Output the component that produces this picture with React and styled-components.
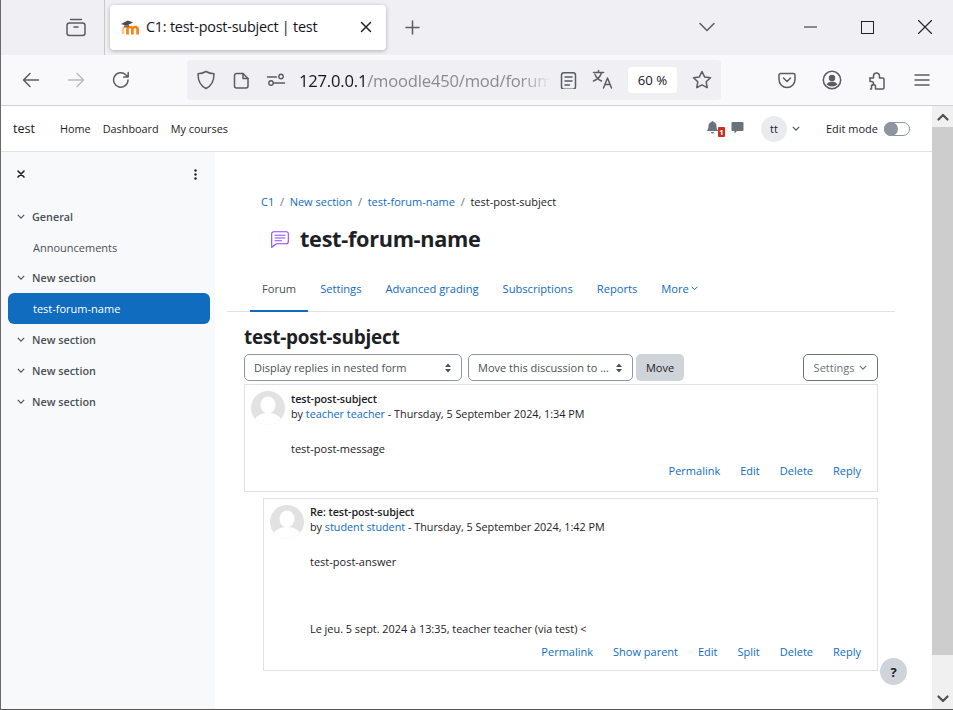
import React from "react";
import styled, { createGlobalStyle } from "styled-components";

const Global = createGlobalStyle`
  html, body { margin: 0; padding: 0; background: #fff; overflow: hidden; }
  * { box-sizing: border-box; }
  body { font-family: "Open Sans", "Noto Sans", sans-serif; }
`;

const Window = styled.div`
  width: 953px; height: 710px; display: flex; flex-direction: column; overflow: hidden;
  position: relative; border-left: 1px solid #6a6a6a; border-bottom: 1px solid #555;
`;
const TabStrip = styled.div`
  height: 55px; flex: none; background: #f0f0f4; display: flex; align-items: flex-start;
`;
const TabManager = styled.div`
  width: 103px; height: 55px; flex: none; display: flex; align-items: center; justify-content: flex-end;
  padding-right: 18px; padding-bottom: 2px;
  color: #5b5b66;
`;
const Divider = styled.div`
  width: 1px; height: 55px; background: #c8c8cc; flex: none; margin-right: 5px;
`;
const Tab = styled.div`
  margin-top: 5px; width: 276px; height: 45px; background: #fff; border-radius: 4px;
  box-shadow: 0 1px 4px rgba(0,0,0,.28); display: flex; align-items: center; padding: 0 14px 2px 10px; flex: none;
  font: 14.4px "Open Sans", sans-serif; color: #15141a;
`;
const TabTitle = styled.span`
  margin-left: 5px; flex: 1; white-space: nowrap; letter-spacing: -0.22px;
`;
const NewTab = styled.div`
  margin-left: 19px; margin-top: 20px; color: #5b5b66; display: flex;
`;
const StripSpacer = styled.div`flex: 1;`;
const ListTabs = styled.div`
  width: 50px; height: 55px; margin-right: 50px; flex: none; display: flex; align-items: center; justify-content: center;
  color: #5b5b66; padding-bottom: 1px;
`;
const WinButton = styled.div`
  width: 57px; height: 55px; flex: none; display: flex; align-items: center; justify-content: center; color: #222;
  padding-bottom: 1px;
`;
const Toolbar = styled.div`
  height: 51px; flex: none; background: #f9f9fb; border-bottom: 1px solid #cfcfd8; display: flex; align-items: flex-start;
  padding-left: 15px; color: #5b5b66;
`;
const NavIcon = styled.div`
  width: 45px; height: 46px; flex: none; display: flex; align-items: center; justify-content: flex-start;
  padding-top: 3px; padding-left: 6px; color: ${p => (p.$off ? "#b9b9c0" : "#5b5b66")};
`;
const UrlBar = styled.div`
  margin-left: 36px; margin-top: 5px; width: 534px; height: 40px; background: #f0f0f4; border-radius: 4px; flex: none;
  display: flex; align-items: center; padding-left: 9px;
`;
const UrlIcon = styled.div`
  width: ${p => p.$w || 34}px; flex: none; display: flex; align-items: center; color: #5b5b66;
  padding-left: ${p => p.$pl || 0}px;
`;
const UrlText = styled.div`
  width: 252px; flex: none; overflow: hidden; white-space: nowrap;
  font: 16.6px "Open Sans", sans-serif; color: #8a8a92; letter-spacing: -0.2px;
  mask-image: linear-gradient(to right, #000 88%, transparent 100%);
  -webkit-mask-image: linear-gradient(to right, #000 88%, transparent 100%);
  b { font-weight: 400; color: #15141a; }
`;
const ZoomChip = styled.div`
  width: 49px; height: 26px; background: #fff; border-radius: 4px; flex: none; margin-left: 13px; margin-right: 15px;
  display: flex; align-items: center; justify-content: center; font: 13.2px "Open Sans", sans-serif; color: #15141a;
`;
const ToolRight = styled.div`
  margin-left: 43px; display: flex; margin-top: 5px; height: 40px; align-items: center;
`;
const ToolRightIcon = styled.div`
  width: 45px; flex: none; display: flex; align-items: center; justify-content: center; color: #5b5b66;
`;

const Page = styled.div`
  flex: 1; display: flex; min-height: 0; background: #fff; color: #1d2125;
  font-size: 11px;
`;
const PageMain = styled.div`
  flex: 1; display: flex; flex-direction: column; min-width: 0;
`;
const NavBar = styled.div`
  height: 46px; flex: none; border-bottom: 1px solid #dee2e6; display: flex; align-items: center; padding: 0 22px 0 12px;
`;
const Brand = styled.div`
  font-size: 12.6px; color: #1d2125; margin-right: 25px;
`;
const NavLink = styled.div`
  margin-right: 12px; font-size: 10.85px; color: #1d2125;
`;
const Grow = styled.div`flex: 1;`;
const NavIconBtn = styled.div`
  position: relative; display: flex; color: #6a737b; margin-right: ${p => p.$mr || 0}px; margin-bottom: 2px;
`;
const Badge = styled.span`
  position: absolute; left: 12px; top: 6px; width: 7px; height: 10px; background: #ca3120; color: #fff;
  font-size: 7.5px; font-weight: 700; line-height: 10px; text-align: center; border-radius: 1px;
`;
const Avatar = styled.div`
  width: 26px; height: 26px; border-radius: 50%; background: #e9ecef; display: flex; align-items: center; justify-content: center;
  font-size: 11px; color: #1d2125; margin-right: 5px;
`;
const Caret = styled.div`
  display: flex; color: #495057; margin-right: ${p => p.$mr || 0}px;
`;
const EditLabel = styled.span`
  font-size: 11px; margin-right: 6px; color: #1d2125;
`;
const Toggle = styled.div`
  width: 26px; height: 14px; border-radius: 7px; border: 1px solid #8f959e; background: #fff; position: relative;
  &::before { content: ""; position: absolute; left: -1px; top: -1px; width: 14px; height: 14px; border-radius: 50%; background: #8f959e; }
`;
const Body = styled.div`
  flex: 1; display: flex; min-height: 0;
`;
const Sidebar = styled.aside`
  width: 214px; flex: none; background: #f8f9fa; display: flex; flex-direction: column;
  padding: 15px 5px 0 7px; color: #495057;
`;
const SideTop = styled.div`
  display: flex; justify-content: space-between; align-items: center; padding: 0 13px 0 9px; height: 14px; margin-bottom: 20px; color: #1d2125;
`;
const CloseMark = styled.div`display: flex; color: #1d2125;`;
const SideSection = styled.div`
  height: 31px; display: flex; align-items: center; padding-left: 9px; gap: 7px; font-weight: 600; font-size: 10.8px; color: #495057;
`;
const SideItem = styled.div`
  height: ${p => (p.$active ? 31 : 30)}px; display: flex; align-items: center; padding-left: 25px; border-radius: 6px;
  font-size: 11px; color: ${p => (p.$active ? "#fff" : "#495057")};
  background: ${p => (p.$active ? "#0f6cbf" : "transparent")};
`;
const Content = styled.main`
  flex: 1; min-width: 0; padding: 41px 54px 0 28px; display: flex; flex-direction: column;
  border-left: 1px solid #fff;
`;
const Breadcrumb = styled.nav`
  display: flex; align-items: center; height: 16px; padding-left: 17px; font-size: 11px; flex: none;
`;
const Crumb = styled.span`color: ${p => (p.$cur ? "#1d2125" : "#0f6cbf")};`;
const Sep = styled.span`color: #6a737b; margin: 0 5.700px;`;
const TitleRow = styled.div`
  margin-top: 13px; height: 34px; display: flex; align-items: center; padding-left: 27px; gap: 11px; flex: none;
`;
const Title = styled.h1`
  margin: 0; font-size: 21.7px; font-weight: 700; color: #1d2125; letter-spacing: -0.3px; line-height: 1;
`;
const Tabs = styled.div`
  margin: 16px -17px 0 -17px; height: 40px; border-bottom: 1px solid #dee2e6; display: flex; padding-left: 23px; flex: none;
`;
const TabLink = styled.div`
  height: 40px; padding: 0 12px 5px; display: flex; align-items: center; gap: 2px; font-size: 11.15px;
  color: ${p => (p.$active ? "#495057" : "#0f6cbf")};
  border-bottom: 2px solid ${p => (p.$active ? "#0f6cbf" : "transparent")};
`;
const Subject = styled.h2`
  margin: 13px 0 0; font-size: 18.9px; font-weight: 700; line-height: 24px; color: #1d2125; letter-spacing: -0.2px; flex: none;
`;
const Controls = styled.div`
  margin-top: 5px; height: 27px; display: flex; gap: 6px; flex: none;
`;
const Select = styled.div`
  width: ${p => p.$w}px; height: 27px; border: 1px solid #8f959e; border-radius: 5px; display: flex; align-items: center;
  justify-content: space-between; padding: 0 9px; font-size: 11px; color: #495057; white-space: nowrap;
`;
const MoveButton = styled.div`
  margin-left: -3px; width: 48px; height: 27px; border-radius: 5px; background: #ced4da; display: flex; align-items: center; justify-content: center;
  font-size: 11px; color: #1d2125;
`;
const SettingsButton = styled.div`
  margin-left: auto; width: 75px; height: 27px; border: 1px solid #6a737b; border-radius: 5px; display: flex; align-items: center; justify-content: center; gap: 5px;
  font-size: 11px; color: #6a737b;
`;
const Post = styled.article`
  margin-top: ${p => p.$mt}px; margin-left: ${p => p.$indent || 0}px; height: ${p => p.$h}px; flex: none;
  border: 1px solid #dee2e6; padding: 6px 16px 0 6px; display: flex; gap: 6px;
`;
const PostBody = styled.div`
  flex: 1; min-width: 0; display: flex; flex-direction: column; height: 100%;
`;
const PostTitle = styled.div`
  margin-top: ${p => (p.$tight ? -1 : 0)}px;
  font-weight: 600; font-size: 10.8px; line-height: 15px; color: #1d2125; letter-spacing: -0.1px;
`;
const Byline = styled.div`
  font-size: 10.8px; line-height: 15px; color: #1d2125; white-space: nowrap;
  a { color: #0f6cbf; text-decoration: none; }
`;
const Message = styled.div`
  margin-top: 20px; font-size: 11px; line-height: 15px; color: #1d2125;
`;
const Quote = styled.div`
  margin-top: 52px; font-size: 10.88px; line-height: 15px; color: #1d2125;
`;
const Actions = styled.div`
  margin-top: auto; margin-bottom: ${p => p.$mb}px; display: flex; justify-content: flex-end; gap: 20px; font-size: 11px; line-height: 15px; color: #0f6cbf;
`;
const Scrollbar = styled.div`
  width: 21px; flex: none; background: #f0f0f0; display: flex; flex-direction: column; color: #505050;
`;
const ScrollArrow = styled.div`
  height: 21px; flex: none; display: flex; align-items: center; justify-content: center;
`;
const ScrollThumb = styled.div`
  height: 528px; flex: none; background: #cdcdcd;
`;
const ScrollTrack = styled.div`flex: 1;`;
const Help = styled.div`
  position: absolute; left: 879px; top: 658px; width: 27px; height: 27px; border-radius: 50%; background: #ced4da;
  display: flex; align-items: center; justify-content: center; font-size: 13px; font-weight: 700; color: #1d2125;
`;

const S = ({ w = 18, h, sw = 1.5, children }) => (
  <svg width={w} height={h || w} viewBox={`0 0 ${w} ${h || w}`} fill="none" stroke="currentColor" strokeWidth={sw} strokeLinecap="round" strokeLinejoin="round">{children}</svg>
);

const Chevron = ({ w = 8 }) => (
  <svg width={w} height={w * 0.7} viewBox="0 0 10 7" fill="none" stroke="currentColor" strokeWidth="1.4"><path d="M1 1.2 5 5.200 9 1.200" /></svg>
);

const MoodleLogo = () => (
  <svg width="21" height="18" viewBox="0 0 21 18" style={{ flex: "none" }}>
    <path d="M3 9.500V16" stroke="#fbc28a" strokeWidth="2.400" fill="none" />
    <path d="M7.500 16.500V11c0-1.300 1-2 2.400-2 1.600 0 2.500.8 2.500 2.300v5.200M12.400 11c.3-1.300 1.300-2 2.700-2 1.600 0 2.500.8 2.500 2.300v5.200" stroke="#f98012" strokeWidth="2.700" fill="none" />
    <path d="M5.500 9.500c-.2-.5-1.500-.5-2 0" stroke="#f98012" strokeWidth="1.500" fill="none" />
    <path d="M1 6 7.800 2.500 13 4.600 6.500 7.800z" fill="#4a4a4a" />
    <path d="M4 7.200v1.600c1.500 1 3.500 1 5 0V6.500L6.500 7.800z" fill="#6a6a6a" />
  </svg>
);

const Spinner = () => (
  <svg width="8" height="12" viewBox="0 0 8 12" fill="#495057"><path d="M4 1.500 7 5H1zM4 10.500 1 7h6z" /></svg>
);

const ForumIcon = () => (
  <svg width="18" height="17" viewBox="0 0 18 17" fill="none" stroke="#8b47f6" strokeWidth="1.100" strokeLinejoin="round" strokeLinecap="round" style={{ flex: "none" }}>
    <path d="M2.700.7h12.600a2 2 0 0 1 2 2v8a2 2 0 0 1-2 2H5.500L.7 16.300V2.700a2 2 0 0 1 2-2z" />
    <path d="M4 4.200h10M4 7h10M4 9.800h6.500" />
  </svg>
);

const UserPic = ({ id }) => (
  <svg width="34" height="34" viewBox="0 0 34 34" style={{ flex: "none" }}>
    <defs><clipPath id={id}><circle cx="17" cy="17" r="17" /></clipPath></defs>
    <g clipPath={`url(#${id})`}>
      <rect width="34" height="34" fill="#e2e2e2" />
      <ellipse cx="17" cy="14" rx="7.500" ry="8.500" fill="#fff" />
      <ellipse cx="17" cy="33" rx="15" ry="11" fill="#fff" />
    </g>
  </svg>
);

export default function App() {
  return (
    <>
      <Global />
      <Window>
        <TabStrip>
          <TabManager>
            <S w={20}>
              <path d="M4.500 2.500h11" /><rect x="1" y="6" width="18" height="12.500" rx="2.500" /><path d="M8 10h4" />
            </S>
          </TabManager>
          <Divider />
          <Tab>
            <MoodleLogo />
            <TabTitle>C1: test-post-subject | test</TabTitle>
            <S w={12}><path d="M1.500 1.500l9 9M10.500 1.500l-9 9" stroke="#222" /></S>
          </Tab>
          <NewTab>
            <S w={15}><path d="M7.500 1v13M1 7.500h13" /></S>
          </NewTab>
          <StripSpacer />
          <ListTabs>
            <S w={16} h={10}><path d="M1 1.500l7 7 7-7" /></S>
          </ListTabs>
          <WinButton><S w={13} h={2} sw={1}><path d="M0 1h13" /></S></WinButton>
          <WinButton><S w={13} sw={1}><rect x=".5" y=".5" width="12" height="12" strokeLinejoin="miter" /></S></WinButton>
          <WinButton><S w={14} sw={1.100}><path d="M.5.5l13 13M13.500.5l-13 13" /></S></WinButton>
        </TabStrip>
        <Toolbar>
          <NavIcon>
            <S w={18}><path d="M16.500 9h-15M8 2.500 1.500 9 8 15.500" /></S>
          </NavIcon>
          <NavIcon $off>
            <S w={18}><path d="M1.500 9h15M10 2.500 16.500 9 10 15.500" /></S>
          </NavIcon>
          <NavIcon>
            <S w={18}><path d="M16 9a7.200 7.200 0 1 1-2.200-5.200L16 6M16.200 1.500V6h-4.500" /></S>
          </NavIcon>
          <UrlBar>
            <UrlIcon $w={37}><S w={20}><path d="M10 1.500c2.500 1.500 4.800 2.200 8 2.300 0 7.500-2.700 12.300-8 14.700C4.700 16.100 2 11.300 2 3.800c3.200-.1 5.500-.8 8-2.300z" /></S></UrlIcon>
            <UrlIcon $w={33}><S w={17}><path d="M3.500 1.500h6.500l5 5v7.500a2 2 0 0 1-2 2h-9.500a2 2 0 0 1-2-2v-10.500a2 2 0 0 1 2-2z" /><path d="M10 1.500v5h5" /></S></UrlIcon>
            <UrlIcon $w={33}><S w={20} sw={1.400}><path d="M1.500 7h9M7.500 13H18.500" /><circle cx="15" cy="6.500" r="2.200" /><circle cx="5" cy="13" r="2.200" /></S></UrlIcon>
            <UrlText><b>127.0.0.1</b>/moodle450/mod/forum</UrlText>
            <UrlIcon $w={34} $pl={9}><S w={17}><rect x="1.500" y=".8" width="14" height="16.400" rx="2.500" /><path d="M5 5h7M5 9h7M5 13h4.500" /></S></UrlIcon>
            <UrlIcon $w={30} $pl={7}>
              <S w={22}><path d="M1.500 3.500h10M6.500 1.500v2M9.500 3.500C8.500 7.500 5.500 10.500 1.500 12M3 5.500c1.200 3 3.500 5.200 6.500 6.500" /><path d="M11.500 19l4-10 4 10M13 15.500h5" /></S>
            </UrlIcon>
            <ZoomChip>60 %</ZoomChip>
            <UrlIcon $w={24}><S w={20}><path d="M10 1.500l2.600 5.400 5.900.8-4.300 4.100 1 5.900-5.200-2.800-5.200 2.800 1-5.900-4.300-4.100 5.900-.8z" /></S></UrlIcon>
          </UrlBar>
          <ToolRight>
            <ToolRightIcon><S w={18}><path d="M2.500 2.500h13a1.500 1.500 0 0 1 1.500 1.500v4.500a8 8 0 0 1-16 0V4a1.500 1.500 0 0 1 1.500-1.500z" /><path d="M5.500 7l3.500 3.500L12.500 7" /></S></ToolRightIcon>
            <ToolRightIcon>
              <svg width="20" height="20" viewBox="0 0 20 20"><circle cx="10" cy="10" r="8.700" fill="none" stroke="currentColor" strokeWidth="1.500" /><circle cx="10" cy="8" r="3.200" fill="currentColor" /><path d="M4.500 14.200c1.500-2 3.500-2.500 5.500-2.500s4 .5 5.500 2.500a7.500 7.500 0 0 1-11 0z" fill="currentColor" /></svg>
            </ToolRightIcon>
            <ToolRightIcon><S w={20}><path d="M3 8h3.500V6a3 3 0 0 1 6 0v2h3a1.500 1.500 0 0 1 1.500 1.500V18a1 1 0 0 1-1 1H8.500v-2.500a2 2 0 0 0-4 0V19H3.500" /><path d="M3 8v3.500h1.500a2 2 0 0 1 0 4" /></S></ToolRightIcon>
            <ToolRightIcon><S w={16} h={14}><path d="M1 2h14M1 7h14M1 12h14" /></S></ToolRightIcon>
          </ToolRight>
        </Toolbar>
        <Page>
          <PageMain>
            <NavBar>
              <Brand>test</Brand>
              <NavLink>Home</NavLink>
              <NavLink>Dashboard</NavLink>
              <NavLink>My courses</NavLink>
              <Grow />
              <NavIconBtn $mr={12}>
                <svg width="13" height="13" viewBox="0 0 13 13" fill="currentColor"><path d="M6.500 0a1 1 0 0 1 1 1c2 .5 3 2 3 4 0 3 1 4 1.800 5H.7c.8-1 1.800-2 1.800-5 0-2 1-3.500 3-4a1 1 0 0 1 1-1zM5 11h3a1.500 1.500 0 0 1-3 0z" /></svg>
                <Badge>1</Badge>
              </NavIconBtn>
              <NavIconBtn $mr={17}>
                <svg width="13" height="13" viewBox="0 0 13 13" fill="currentColor"><path d="M1.500 1h10a1 1 0 0 1 1 1v7a1 1 0 0 1-1 1H6l-2.500 2.500V10h-2a1 1 0 0 1-1-1V2a1 1 0 0 1 1-1z" /></svg>
              </NavIconBtn>
              <Avatar>tt</Avatar>
              <Caret $mr={26}><Chevron /></Caret>
              <EditLabel>Edit mode</EditLabel>
              <Toggle />
            </NavBar>
            <Body>
              <Sidebar>
                <SideTop>
                  <CloseMark><S w={8} sw={1.600}><path d="M1 1l6 6M7 1L1 7" /></S></CloseMark>
                  <svg width="3" height="11" viewBox="0 0 3 11" fill="#1d2125"><circle cx="1.500" cy="1.500" r="1.200" /><circle cx="1.500" cy="5.500" r="1.200" /><circle cx="1.500" cy="9.500" r="1.200" /></svg>
                </SideTop>
                <SideSection><Chevron />General</SideSection>
                <SideItem>Announcements</SideItem>
                <SideSection><Chevron />New section</SideSection>
                <SideItem $active>test-forum-name</SideItem>
                <SideSection><Chevron />New section</SideSection>
                <SideSection><Chevron />New section</SideSection>
                <SideSection><Chevron />New section</SideSection>
              </Sidebar>
              <Content>
                <Breadcrumb>
                  <Crumb>C1</Crumb><Sep>/</Sep>
                  <Crumb>New section</Crumb><Sep>/</Sep>
                  <Crumb>test-forum-name</Crumb><Sep>/</Sep>
                  <Crumb $cur>test-post-subject</Crumb>
                </Breadcrumb>
                <TitleRow>
                  <ForumIcon />
                  <Title>test-forum-name</Title>
                </TitleRow>
                <Tabs>
                  <TabLink $active>Forum</TabLink>
                  <TabLink>Settings</TabLink>
                  <TabLink>Advanced grading</TabLink>
                  <TabLink>Subscriptions</TabLink>
                  <TabLink>Reports</TabLink>
                  <TabLink>More<Chevron w={7} /></TabLink>
                </Tabs>
                <Subject>test-post-subject</Subject>
                <Controls>
                  <Select $w={218}>Display replies in nested form<Spinner /></Select>
                  <Select $w={165}>Move this discussion to ...<Spinner /></Select>
                  <MoveButton>Move</MoveButton>
                  <SettingsButton>Settings<Chevron w={8} /></SettingsButton>
                </Controls>
                <Post $mt={3} $h={108}>
                  <UserPic id="uc1" />
                  <PostBody>
                    <PostTitle>test-post-subject</PostTitle>
                    <Byline>by <a>teacher teacher</a> - Thursday, 5 September 2024, 1:34 PM</Byline>
                    <Message>test-post-message</Message>
                    <Actions $mb={13}><span>Permalink</span><span>Edit</span><span>Delete</span><span>Reply</span></Actions>
                  </PostBody>
                </Post>
                <Post $mt={6} $indent={19} $h={173}>
                  <UserPic id="uc2" />
                  <PostBody>
                    <PostTitle $tight>Re: test-post-subject</PostTitle>
                    <Byline>by <a>student student</a> - Thursday, 5 September 2024, 1:42 PM</Byline>
                    <Message>test-post-answer</Message>
                    <Quote>Le jeu. 5 sept. 2024 à 13:35, teacher teacher (via test) &lt;</Quote>
                    <Actions $mb={11}><span>Permalink</span><span>Show parent</span><span>Edit</span><span>Split</span><span>Delete</span><span>Reply</span></Actions>
                  </PostBody>
                </Post>
              </Content>
            </Body>
          </PageMain>
          <Scrollbar>
            <ScrollArrow><S w={12} h={8} sw={2.200}><path d="M1.500 6.500 6 2l4.500 4.500" /></S></ScrollArrow>
            <ScrollThumb />
            <ScrollTrack />
            <ScrollArrow><S w={12} h={8} sw={2.200}><path d="M1.500 1.500 6 6l4.500-4.500" /></S></ScrollArrow>
          </Scrollbar>
        </Page>
        <Help>?</Help>
      </Window>
    </>
  );
}
